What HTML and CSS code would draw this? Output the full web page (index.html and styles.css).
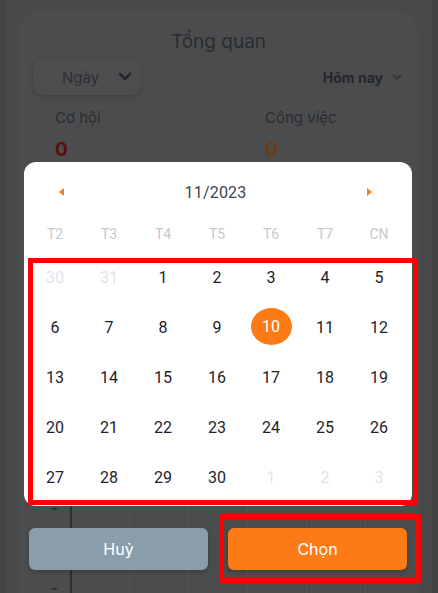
FILE: index.html
```html
<!DOCTYPE html>
<html lang="vi">
<head>
<meta charset="utf-8">
<title>Tổng quan</title>
<link rel="stylesheet" href="styles.css">
</head>
<body>
<div class="screen">
  <div class="dash">
    <h1 class="dash-title">Tổng quan</h1>
    <div class="controls">
      <div class="select">
        <span>Ngày</span>
        <svg class="chev-bold" viewBox="0 0 14 10" width="14" height="10"><path d="M2 2 L7 7 L12 2" fill="none" stroke="#26282c" stroke-width="2.6" stroke-linecap="round" stroke-linejoin="round"/></svg>
      </div>
      <div class="today">
        <span>Hôm nay</span>
        <svg viewBox="0 0 10 6" width="10" height="6"><path d="M1 1 L5 5 L9 1" fill="none" stroke="#2c2e33" stroke-width="1.3"/></svg>
      </div>
    </div>
    <div class="stats">
      <div class="stat"><div class="stat-label">Cơ hội</div><div class="stat-val red">0</div></div>
      <div class="stat"><div class="stat-label">Công việc</div><div class="stat-val orange">0</div></div>
    </div>
    <div class="chart">
      <div class="tick t1"></div>
      <div class="tick t2"></div>
    </div>
  </div>

  <div class="modal">
    <div class="calendar">
      <div class="cal-head">
        <span class="arrow left"></span>
        <span class="month">11/2023</span>
        <span class="arrow right"></span>
      </div>
      <div class="weekdays">
        <span>T2</span><span>T3</span><span>T4</span><span>T5</span><span>T6</span><span>T7</span><span>CN</span>
      </div>
      <div class="days">
        <span class="muted">30</span><span class="muted">31</span><span>1</span><span>2</span><span>3</span><span>4</span><span>5</span>
        <span>6</span><span>7</span><span>8</span><span>9</span><span class="sel"><b>10</b></span><span>11</span><span>12</span>
        <span>13</span><span>14</span><span>15</span><span>16</span><span>17</span><span>18</span><span>19</span>
        <span>20</span><span>21</span><span>22</span><span>23</span><span>24</span><span>25</span><span>26</span>
        <span>27</span><span>28</span><span>29</span><span>30</span><span class="muted">1</span><span class="muted">2</span><span class="muted">3</span>
      </div>
    </div>
    <div class="actions">
      <button class="btn cancel">Huỷ</button>
      <button class="btn ok">Chọn</button>
    </div>
  </div>

  <div class="mark mark-days"></div>
  <div class="mark mark-ok"></div>
</div>
</body>
</html>
```
FILE: styles.css
```css
* { box-sizing: border-box; }
html, body { margin: 0; padding: 0; overflow: hidden; }
body {
  width: 438px;
  height: 593px;
  background: #444547;
  font-family: Inter, "Noto Sans", sans-serif;
}
.screen {
  position: relative;
  width: 438px;
  height: 593px;
  overflow: hidden;
  padding: 10px 20px 0 18px;
  background: linear-gradient(to right, #434446 0 5px, #48494b 5px 432px, #414244 432px);
}
.dash {
  width: 400px;
  height: 583px;
  overflow: hidden;
  background: #4b4c4e;
  border-radius: 22px 22px 0 0;
  padding-top: 20px;
}
.dash-title {
  margin: 0;
  text-align: center;
  font-weight: 400;
  font-size: 19px;
  line-height: 24px;
  color: #2a2c30;
  padding-left: 1px;
}
.controls {
  display: flex;
  justify-content: space-between;
  align-items: center;
  margin-top: 5px;
  padding: 0 16px 0 15px;
}
.select {
  width: 108px;
  height: 36px;
  border-radius: 9px;
  background: #4d4e50;
  box-shadow: 0 1px 4px rgba(0,0,0,0.18);
  display: flex;
  align-items: center;
  padding-left: 29px;
  gap: 19px;
  font-size: 15px;
  color: #2e3034;
}
.today {
  display: flex;
  align-items: center;
  gap: 9px;
  font-size: 14px;
  font-weight: 700;
  color: #25272b;
}
.stats {
  display: flex;
  padding-left: 37px;
  margin-top: 13px;
}
.stat { width: 210px; flex-shrink: 0; }
.stat-label { font-size: 15px; line-height: 20px; color: #2a2c30; }
.stat-val { font-size: 19px; font-weight: 700; margin-top: 11px; line-height: 22px; }
.red { color: #5c0f0f; }
.orange { color: #6a3c12; }
.chart {
  position: relative;
  margin-top: 40px;
  margin-left: 52px;
  height: 400px;
  border-left: 2px solid #2f3032;
  background: repeating-linear-gradient(to right, transparent 0 57px, #525355 57px 58px, transparent 58px 59px);
}
.tick { position: absolute; left: -20px; width: 5px; height: 2px; background: #2e2f31; }
.t1 { top: 307px; }
.t2 { top: 387px; }

.modal {
  position: absolute;
  left: 24px;
  top: 162px;
  width: 388px;
}
.calendar {
  background: #fff;
  border-radius: 12px;
  padding: 0 6px 4px 4px;
  font-family: Roboto, "Noto Sans", sans-serif;
}
.cal-head {
  height: 60px;
  display: flex;
  align-items: center;
  justify-content: space-between;
  padding: 0 34px 0 31px;
}
.month { font-size: 16px; color: #3b4350; letter-spacing: 0.2px; }
.arrow { width: 0; height: 0; border-top: 4.5px solid transparent; border-bottom: 4.5px solid transparent; }
.arrow.left { border-right: 5px solid #f97a1c; }
.arrow.right { border-left: 5px solid #f97a1c; }
.weekdays {
  display: grid;
  grid-template-columns: repeat(7, 54px);
  height: 24px;
  align-items: center;
  text-align: center;
  font-size: 14px;
  color: #c3c9d2;
}
.days {
  display: grid;
  grid-template-columns: repeat(7, 54px);
  grid-auto-rows: 50px;
  margin-top: 6px;
  font-size: 16px;
  color: #1d232d;
}
.days span {
  display: flex;
  align-items: center;
  justify-content: center;
}
.days .muted { color: #e1e4ea; }
.days .sel b {
  font-weight: 400;
  width: 41px;
  height: 37px;
  border-radius: 50%;
  background: #fd7b16;
  color: #fff;
  display: flex;
  align-items: center;
  justify-content: center;
  margin-top: -2px;
}
.actions {
  display: flex;
  gap: 20px;
  padding: 0 5px;
  margin-top: 22px;
}
.btn {
  flex: 1;
  height: 42px;
  border: 0;
  border-radius: 6px;
  color: #fff;
  font-family: Inter, "Noto Sans", sans-serif;
  font-size: 16px;
  box-shadow: 0 2px 4px rgba(0,0,0,0.2);
}
.cancel { background: #8a9dab; }
.ok { background: #fd7b16; }

.mark { position: absolute; border: 5px solid #ff0000; }
.mark-days { left: 28px; top: 258px; width: 390px; height: 247px; }
.mark-ok { left: 219px; top: 514px; width: 202px; height: 69px; }
```
